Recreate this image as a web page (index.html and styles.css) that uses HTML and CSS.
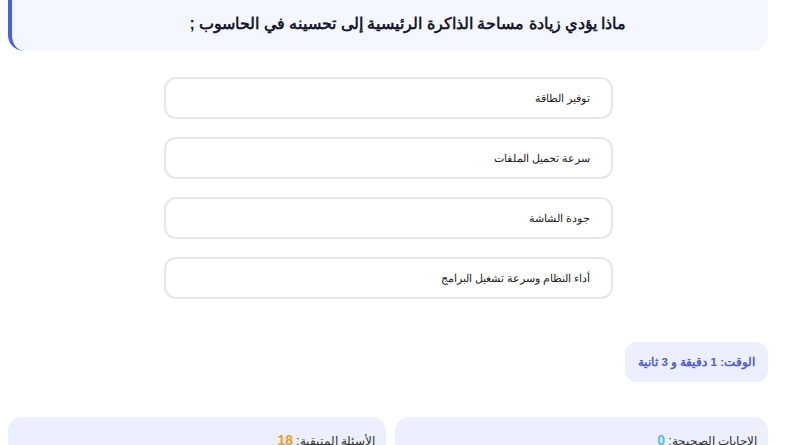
FILE: index.html
```html
<!DOCTYPE html>
<html lang="ar" dir="rtl">
<head>
  <meta charset="UTF-8">
  <title>اختبار الحاسوب</title>
  <link rel="stylesheet" href="styles.css">
</head>
<body>
  <div class="quiz">
    <div class="question">
      <h3>ماذا يؤدي زيادة مساحة الذاكرة الرئيسية إلى تحسينه في الحاسوب ;</h3>
    </div>

    <ul class="options">
      <li class="option">توفير الطاقة</li>
      <li class="option">سرعة تحميل الملفات</li>
      <li class="option">جودة الشاشة</li>
      <li class="option">أداء النظام وسرعة تشغيل البرامج</li>
    </ul>

    <div class="timer-row">
      <div class="timer">الوقت: 1 دقيقة و 3 ثانية</div>
    </div>

    <div class="stats">
      <div class="stat">الإجابات الصحيحة: <span class="correct">0</span></div>
      <div class="stat">الأسئلة المتبقية: <span class="left">18</span></div>
    </div>
  </div>
</body>
</html>
```

FILE: styles.css
```css
html {
  box-sizing: border-box;
  font-family: Arial, sans-serif;
}
*, *::before, *::after {
  box-sizing: inherit;
}

body {
  margin: 0;
  background: #fff;
  color: #222;
  overflow: hidden;
}

.quiz {
  width: 760px;
  margin: -16px 17px 0 0;
}

.question {
  background: #f4f7ff;
  border-left: 4px solid #4361ee;
  border-radius: 16px;
  padding: 31px 20px 18px 56px;
  text-align: center;
}
.question h3 {
  margin: 0;
  font-size: 16px;
  line-height: 18px;
  font-weight: bold;
  color: #1a1a2e;
}

.options {
  list-style: none;
  margin: 26px auto 0;
  padding: 0;
  width: 449px;
  display: flex;
  flex-direction: column;
  gap: 18px;
}
.option {
  border: 2px solid #e5e7eb;
  border-radius: 12px;
  height: 42px;
  padding: 0 20px;
  display: flex;
  align-items: center;
  font-size: 11px;
  color: #222;
  background: #fff;
}

.timer-row {
  display: flex;
  margin-top: 43px;
}
.timer {
  background: #eceffd;
  color: #4f5bd5;
  font-weight: bold;
  font-size: 11.5px;
  border-radius: 12px;
  height: 40px;
  padding: 0 13px;
  display: flex;
  align-items: center;
}

.stats {
  display: flex;
  gap: 9px;
  margin-top: 35px;
}
.stat {
  flex: 1;
  background: #eceffd;
  border-radius: 14px;
  padding: 15px 11px 20px;
  font-size: 12px;
  color: #333;
}
.stat:first-child {
  flex: 0 0 373px;
}
.correct {
  color: #4cc0f0;
  font-weight: bold;
  font-size: 14px;
}
.left {
  color: #f39c12;
  font-weight: bold;
  font-size: 14px;
}
```
